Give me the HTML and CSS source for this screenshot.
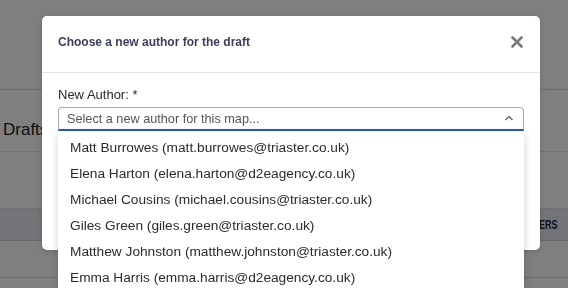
FILE: index.html
```html
<!DOCTYPE html>
<html lang="en">
	<head>
		<meta charset="UTF-8" />
		<meta name="viewport" content="width=device-width, initial-scale=1.0" />
		<title>Change draft author</title>
		<link rel="stylesheet" href="styles.css">
	</head>
	<body>
		<div class="page">
			<header class="topbar"></header>
			<div class="title-row">
				<h2>Drafts</h2>
			</div>
			<div class="toolbar"></div>
			<div class="table-head">
				<span class="col-approvers">APPROVERS</span>
			</div>
			<div class="table-row"></div>
			<div class="table-row"></div>
		</div>

		<div class="backdrop">
			<div class="modal">
				<div class="modal-header">
					<h3>Choose a new author for the draft</h3>
					<button class="close" aria-label="Close">
						<svg width="12" height="12" viewBox="0 0 12 12">
							<path d="M1.5 1.5 L10.5 10.5 M10.5 1.5 L1.5 10.5" stroke="#7a7a7a" stroke-width="2.6" stroke-linecap="round" />
						</svg>
					</button>
				</div>
				<div class="modal-body">
					<label class="field-label">New Author: *</label>
					<div class="select-wrap">
						<div class="select">
							<span class="placeholder">Select a new author for this map...</span>
							<svg class="caret" width="10" height="6" viewBox="0 0 10 6">
								<path d="M1.5 5 L5 1.5 L8.5 5" fill="none" stroke="#666" stroke-width="1.3" />
							</svg>
						</div>
						<ul class="dropdown">
							<li>Matt Burrowes (matt.burrowes@triaster.co.uk)</li>
							<li>Elena Harton (elena.harton@d2eagency.co.uk)</li>
							<li>Michael Cousins (michael.cousins@triaster.co.uk)</li>
							<li>Giles Green (giles.green@triaster.co.uk)</li>
							<li>Matthew Johnston (matthew.johnston@triaster.co.uk)</li>
							<li>Emma Harris (emma.harris@d2eagency.co.uk)</li>
						</ul>
					</div>
				</div>
			</div>
		</div>
	</body>
</html>
```

FILE: styles.css
```css
body {
	margin: 0;
	font-family: 'Liberation Sans', Arial, sans-serif;
	color: #222;
	background: #fff;
	overflow: hidden;
}
.page {
	width: 100%;
}
.topbar {
	height: 89px;
	border-bottom: 1px solid #d6d6d6;
}
.title-row {
	height: 62px;
	border-bottom: 1px solid #e2e2e2;
	display: flex;
	align-items: flex-end;
	padding: 0 0 11px 3px;
	box-sizing: border-box;
}
.title-row h2 {
	margin: 0;
	font-size: 17px;
	font-weight: 400;
	color: #1c1c1c;
}
.toolbar {
	height: 56px;
	border-bottom: 1px solid #dcdcdc;
}
.table-head {
	height: 31px;
	background: #e4e9ef;
	border-bottom: 1px solid #d4d4d4;
	display: flex;
	align-items: center;
	justify-content: flex-end;
	padding: 0 11px 0 12px;
	font-size: 12.5px;
	font-weight: 700;
	color: #1d2533;
}
.col-approvers {
	display: inline-block;
	transform: scaleX(0.72); /* condensed header face */
	transform-origin: right center;
}
.table-row {
	height: 36px;
	border-bottom: 1px solid #d6d6d6;
}

/* modal layer */
.backdrop {
	position: fixed;
	top: 0;
	left: 0;
	right: 0;
	bottom: 0;
	background: rgba(0, 0, 0, 0.5);
}
.modal {
	position: absolute;
	top: 16px;
	left: 42px;
	width: 498px;
	height: 234px;
	background: #fff;
	border-radius: 5px;
	box-shadow: 0 2px 6px rgba(0, 0, 0, 0.15);
}
.modal-header {
	height: 57px;
	border-bottom: 1px solid #e4e4e4;
	display: flex;
	align-items: center;
	justify-content: space-between;
	padding: 0 16px 5px 16px;
	box-sizing: border-box;
}
.modal-header h3 {
	margin: 0;
	font-size: 12px;
	font-weight: 700;
	color: #3a3e5c;
}
.close {
	border: 0;
	background: none;
	padding: 0;
	margin-right: 1px;
	display: flex;
}
.modal-body {
	padding: 14px 16px 16px 16px;
}
.field-label {
	display: block;
	font-size: 13px;
	color: #2a2a2a;
	margin-bottom: 5px;
}
.select-wrap {
	position: relative;
}
.select {
	height: 21px;
	border: 1px solid #aaa;
	border-bottom: 2px solid #2b5aa8;
	border-radius: 4px 4px 0 0;
	display: flex;
	align-items: center;
	justify-content: space-between;
	padding: 0 9px 0 8px;
}
.placeholder {
	font-size: 12.7px;
	color: #555;
}
.caret {
	margin-top: -1px;
}
.dropdown {
	position: absolute;
	top: 25px;
	left: 0;
	right: 0;
	margin: 0;
	padding: 3px 0 0 0;
	list-style: none;
	background: #fff;
	border-radius: 0 0 4px 4px;
	box-shadow: 0 3px 8px rgba(0, 0, 0, 0.18);
}
.dropdown li {
	height: 26px;
	line-height: 26px;
	padding-left: 12px;
	font-size: 13.7px;
	color: #2b2b2b;
}
```
